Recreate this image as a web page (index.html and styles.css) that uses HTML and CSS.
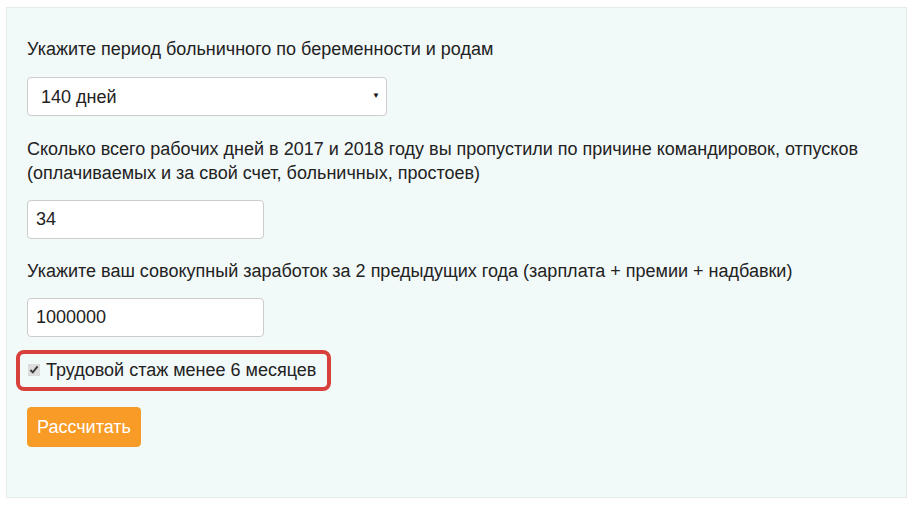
FILE: index.html
```html
<!DOCTYPE html>
<html lang="ru">
  <head>
    <meta charset="UTF-8" />
    <title>Калькулятор декретных</title>
    <link rel="stylesheet" href="styles.css">
  </head>
  <body>
    <div class="page">
      <form class="calc">
        <div class="field">
          <label class="field-label" for="period">Укажите период больничного по беременности и родам</label>
          <div class="select-wrap">
            <select id="period" class="control select">
              <option>140 дней</option>
              <option>156 дней</option>
              <option>194 дня</option>
            </select>
            <span class="select-arrow">&#9660;</span>
          </div>
        </div>

        <div class="field">
          <label class="field-label" for="missed">Сколько всего рабочих дней в 2017 и 2018 году вы пропустили по причине командировок, отпусков (оплачиваемых и за свой счет, больничных, простоев)</label>
          <input id="missed" class="control input" type="text" value="34" />
        </div>

        <div class="field field-last">
          <label class="field-label" for="salary">Укажите ваш совокупный заработок за 2 предыдущих года (зарплата + премии + надбавки)</label>
          <input id="salary" class="control input" type="text" value="1000000" />
        </div>

        <div class="check-row">
          <label class="check">
            <input type="checkbox" checked />
            <span>Трудовой стаж менее 6 месяцев</span>
          </label>
        </div>

        <button type="button" class="btn-calc">Рассчитать</button>
      </form>
    </div>
  </body>
</html>
```

FILE: styles.css
```css
* {
  box-sizing: border-box;
  margin: 0;
  padding: 0;
}

body {
  font-family: "Liberation Sans", Arial, sans-serif;
  font-size: 18px;
  line-height: 24px;
  color: #222222;
  background-color: #ffffff;
}

.page {
  padding: 7px 10px 11px 6px;
}

.calc {
  background-color: #f2f9f9;
  border: 1px solid #e3ebeb;
  padding: 29px 20px 50px 20px;
  display: flex;
  flex-direction: column;
  align-items: flex-start;
}

.field {
  display: flex;
  flex-direction: column;
  align-items: flex-start;
  gap: 15px;
  margin-bottom: 21px;
}

.field:nth-child(2) {
  margin-bottom: 20px;
}

.field-last {
  margin-bottom: 13px;
}

.field-label {
  display: block;
}

.control {
  font-family: inherit;
  font-size: 18px;
  color: #222222;
  background-color: #ffffff;
  border: 1px solid #cccccc;
  border-radius: 4px;
  height: 39px;
  outline: none;
}

.select-wrap {
  position: relative;
  width: 360px;
  margin-top: 1px;
}

.select {
  width: 100%;
  padding: 0 30px 0 13px;
  appearance: none;
  -webkit-appearance: none;
}

.select-arrow {
  position: absolute;
  right: 7px;
  top: 12px;
  font-size: 8px;
  line-height: 14px;
  color: #111111;
  pointer-events: none;
}

.input {
  width: 237px;
  padding: 0 8px;
}

.check-row {
  margin: 0 0 16px -11px;
  border: 4px solid #d8413b;
  border-radius: 8px;
  padding: 4px 11px 5px 8px;
  height: 41px;
}

.check {
  display: flex;
  align-items: center;
  gap: 6px;
}

.check input {
  width: 12px;
  height: 12px;
  margin: 0;
  accent-color: #dddddd;
}

.btn-calc {
  font-family: inherit;
  font-size: 18px;
  color: #ffffff;
  background-color: #f89c27;
  border: 1px solid #f59a26;
  border-radius: 4px;
  height: 40px;
  padding: 0 9px;
  cursor: pointer;
}
```
